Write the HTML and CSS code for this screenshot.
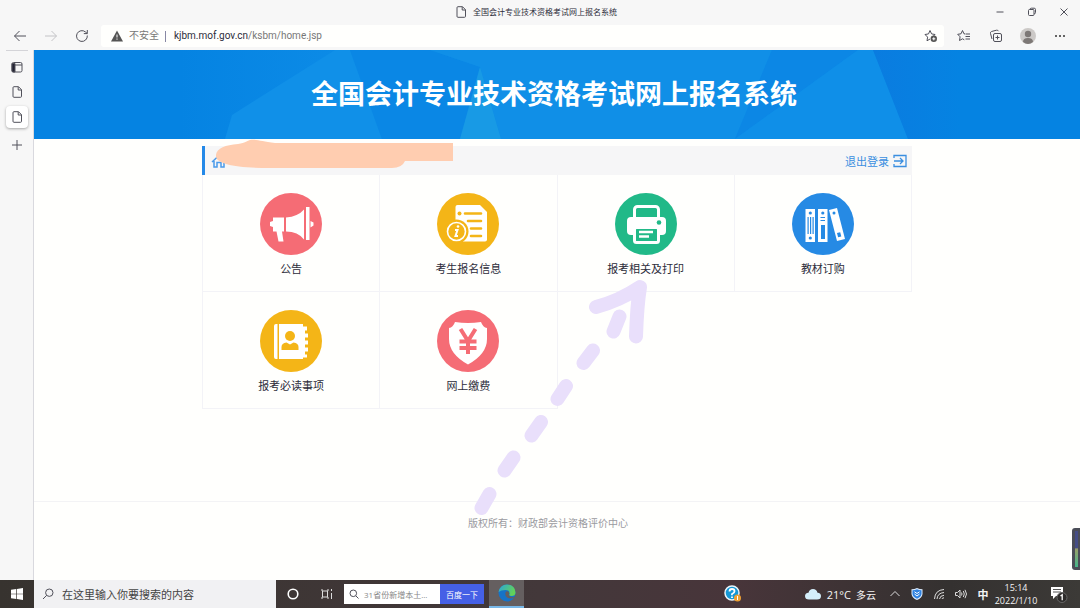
FILE: index.html
```html
<!DOCTYPE html>
<html lang="zh-CN">
<head>
<meta charset="utf-8">
<meta name="viewport" content="width=device-width, initial-scale=1">
<title>全国会计专业技术资格考试网上报名系统</title>
<link rel="stylesheet" href="styles.css">
</head>
<body>
<div class="titlebar">
  <div class="tab-title">
    <svg class="i12" viewBox="0 0 12 12"><path d="M2 1.700q0-1 1-1H7.500L10.500 3.700v6.600q0 1-1 1H3q-1 0-1-1zM7.200.8V4h3.300"/></svg>
    <span>全国会计专业技术资格考试网上报名系统</span>
  </div>
  <div class="window-buttons">
    <button type="button" aria-label="最小化"><svg class="i12" viewBox="0 0 12 12"><path d="M2.500 6h7"/></svg></button>
    <button type="button" aria-label="还原"><svg class="i12" viewBox="0 0 12 12"><rect x="2.500" y="3.500" width="5.500" height="6" rx="1"/><path d="M4 3.500q0-1.300 1.300-1.300h2.900q1.300 0 1.300 1.300v3q0 1.300-1.300 1.300"/></svg></button>
    <button type="button" aria-label="关闭"><svg class="i12" viewBox="0 0 12 12"><path d="M2.500 2.500l7 7M9.500 2.500l-7 7"/></svg></button>
  </div>
</div>

<div class="toolbar">
  <div class="nav-buttons">
    <button type="button" aria-label="后退"><svg class="i14" viewBox="0 0 14 14"><path d="M13 7H1.500M6.500 2l-5 5 5 5"/></svg></button>
    <button type="button" class="faded" aria-label="前进"><svg class="i14" viewBox="0 0 14 14"><path d="M1 7h11.500M7.500 2l5 5-5 5"/></svg></button>
    <button type="button" aria-label="刷新"><svg class="i14" viewBox="0 0 14 14"><path d="M12.300 6.500A5.400 5.400 0 1 1 10.500 3l1.700 1.500M12.300 1v3.600H8.800"/></svg></button>
  </div>
  <div class="address">
    <svg class="i12" viewBox="0 0 12 12"><path class="warn" d="M6 .5L12 11.500H0z"/><path class="warn-mark" d="M6 4.500v3M6 8.500v1.200"/></svg>
    <span class="insecure">不安全</span>
    <span class="divider"></span>
    <span class="url">kjbm.mof.gov.cn<span class="url-path">/ksbm/home.jsp</span></span>
    <button type="button" class="star" aria-label="收藏此页"><svg class="i14" viewBox="0 0 14 14"><path d="M6 10L3 11.800l.6-3.700L1 5.500l3.500-.6L6 1.500l1.600 3.400 3.400.6-1.500 1.500"/><circle class="dark" cx="9.800" cy="9.800" r="3.200"/><path class="white-line" d="M8.300 9.800h3M9.800 8.300v3"/></svg></button>
  </div>
  <div class="tool-buttons">
    <button type="button" aria-label="收藏夹"><svg class="i14" viewBox="0 0 14 14"><path d="M8.500 5L7 4.800 5.500 1.500 4 4.800l-3.300.5L3.100 7.800l-.6 3.700 3-1.700 1.800 1M9 5h4M8.500 7.500H13M8.500 10H13"/></svg></button>
    <button type="button" aria-label="集锦"><svg class="i14" viewBox="0 0 14 14"><rect x="4.500" y="4.500" width="8" height="8" rx="1.500"/><path d="M8.500 6.500v4M6.500 8.500h4M3 10L1.500 4.500q-.4-1.500 1-2l5-1.300q1.500-.3 2 1"/></svg></button>
    <button type="button" aria-label="用户"><svg class="i16" viewBox="0 0 16 16"><circle cx="8" cy="8" r="8" fill="#ccc9c7" stroke="none"/><circle cx="8" cy="6" r="3.200" fill="#7d7876" stroke="none"/><path d="M3 14q0-4 5-4t5 4q-5 4-10 0" fill="#7d7876" stroke="none"/></svg></button>
    <button type="button" aria-label="更多"><svg class="i12" viewBox="0 0 12 12"><g fill="#333" stroke="none"><circle cx="2" cy="6" r="1"/><circle cx="6" cy="6" r="1"/><circle cx="10" cy="6" r="1"/></g></svg></button>
  </div>
</div>

<div class="window">
  <nav class="sidebar" aria-label="标签页">
    <button type="button" aria-label="垂直标签"><svg class="i12" viewBox="0 0 12 12"><rect x="1" y="1.500" width="10" height="9.500" rx="1.500"/><path d="M1 4h10"/><path d="M1 2.500h3V11H2q-1 0-1-1z" fill="#223"/></svg></button>
    <button type="button" aria-label="标签 1"><svg class="i12" viewBox="0 0 12 12"><path d="M2 1.700q0-1 1-1H7.500L10.500 3.700v6.600q0 1-1 1H3q-1 0-1-1zM7.200.8V4h3.300"/></svg></button>
    <button type="button" class="active" aria-label="标签 2"><svg class="i12" viewBox="0 0 12 12"><path d="M2 1.700q0-1 1-1H7.500L10.500 3.700v6.600q0 1-1 1H3q-1 0-1-1zM7.200.8V4h3.300"/></svg></button>
    <button type="button" class="new-tab" aria-label="新建标签"><svg class="i12" viewBox="0 0 12 12"><path d="M6 1v10M1 6h10"/></svg></button>
  </nav>

  <div class="page">
    <header class="banner">
      <svg class="facets" viewBox="34 50 1046 89" preserveAspectRatio="none" aria-hidden="true">
        <defs>
          <linearGradient id="mid"><stop offset="0" stop-color="#0583e2"/><stop offset=".25" stop-color="#0d8ce7"/><stop offset="1" stop-color="#0d8de8"/></linearGradient>
          <linearGradient id="edge"><stop offset="0" stop-color="#0a7ce0"/><stop offset="1" stop-color="#0583e2"/></linearGradient>
        </defs>
        <path fill="url(#mid)" d="M180 50H873L908 139H180z"/>
        <path fill="#1090e8" d="M232 115L335 50H350L382 139H225z"/>
        <path fill="#0a87e5" d="M350 50H430L480 67 460 139H382z"/>
        <path fill="#108fe7" d="M430 50H772L735 139H501L480 67z"/>
        <path fill="#189ae5" d="M480 67L501 139H460z"/>
        <path fill="#0c87e5" d="M772 50H858L735 139z"/>
        <path fill="#0f8fe8" d="M858 50H873L908 139H735z"/>
        <path fill="url(#edge)" d="M873 50H960V139H908z"/>
      </svg>
      <h1>全国会计专业技术资格考试网上报名系统</h1>
    </header>

    <main class="panel">
      <div class="userbar">
        <svg class="home" viewBox="0 0 16 14"><path d="M1 8l7-6.500L15 8M3 7v6h3V8.500h4V13h3V7"/></svg>
        <a class="logout" href="#logout">退出登录
          <svg class="i14" viewBox="0 0 14 14"><path d="M1 4V1.500h12v11H1V10M1 7h8.500M7 4l3 3-3 3"/></svg>
        </a>
        <svg class="scribble" viewBox="216 139 237 30" aria-hidden="true"><path d="M453 143H275C262 142 258 139 250 140 246 141 246 143 238 144 224 145 215 149 216 157 218 164 235 168 270 168H392Q402 168 405 161H453z"/></svg>
      </div>

      <div class="tiles">
        <a class="tile" href="#notice">
          <svg class="badge" viewBox="0 0 62 62"><circle cx="31" cy="31" r="31" fill="#f56c75"/><g fill="#fff"><path d="M13 24.500h11v14h-2l1.500 10h-5l-2-10H13v-4.500l-3-1v-4l3-1zM26 24.500q12-1 18-8v30q-6-8-18-8zM46 14h3.500v33H46zM50.500 28l3 1.500v3l-3 2z"/></g></svg>
          <span>公告</span>
        </a>
        <a class="tile" href="#info">
          <svg class="badge" viewBox="0 0 62 62"><circle cx="31" cy="31" r="31" fill="#f4b517"/><path fill="#fff" d="M18.500 14q0-2 2-2H43l7 7v27.500q0 2-2 2H26L18.500 29z"/><g stroke="#f4b517" stroke-width="2.600" stroke-linecap="round"><path d="M28 20.500h16M31 28h13M34 35.500h10M34 43h10"/></g><circle cx="22.500" cy="20.500" r="2" fill="#f4b517"/><circle cx="19.500" cy="38.500" r="12" fill="#f4b517"/><circle cx="19.500" cy="38.500" r="9" fill="none" stroke="#fff" stroke-width="1.600"/><path d="M18 37h2.500l-2 6h2.500" fill="none" stroke="#fff" stroke-width="2"/><circle cx="21" cy="33.500" r="1.300" fill="#fff"/></svg>
          <span>考生报名信息</span>
        </a>
        <a class="tile" href="#print">
          <svg class="badge" viewBox="0 0 62 62"><circle cx="31" cy="31" r="31" fill="#21b988"/><rect x="19.500" y="13.500" width="24" height="18" rx="3" fill="none" stroke="#fff" stroke-width="3"/><rect x="12" y="24" width="39" height="18" rx="4" fill="#fff"/><circle cx="44" cy="29.500" r="2.300" fill="#21b988"/><rect x="19.500" y="34.500" width="24" height="15" rx="2" fill="#21b988" stroke="#fff" stroke-width="3"/><path d="M24 39h14M24 43.500h10" stroke="#fff" stroke-width="2.400"/></svg>
          <span>报考相关及打印</span>
        </a>
        <a class="tile" href="#books">
          <svg class="badge" viewBox="0 0 62 62"><circle cx="31" cy="31" r="31" fill="#268ae4"/><path fill="#fff" d="M13.500 16H23v33h-9.500zM26 16h9.500v33H26zM37 17l8-2 8 31-8 2z"/><g fill="#268ae4"><circle cx="18.300" cy="20" r="1.600"/><circle cx="18.300" cy="45" r="1.600"/><path d="M15.500 24h1.200v17h-1.200zM18 24h1.200v17H18zM20.500 24h1.200v17h-1.200zM29 32h4v14h-4zM28.500 24h4.500v1h-4.500zM28.500 27h4.500v1h-4.500zM45 40l3.200-.8 1.100 4.300-3.200.8z"/><circle cx="30.800" cy="20" r="1.600"/><circle cx="42" cy="20" r="1.500"/></g></svg>
          <span>教材订购</span>
        </a>
        <a class="tile" href="#rules">
          <svg class="badge" viewBox="0 0 62 62"><circle cx="31" cy="31" r="31" fill="#f4b517"/><path fill="#fff" d="M14 16q0-2 2-2h1.500v35H16q-2 0-2-2zM19 14h24v2.500h4v4h-2v3h3v4h-3v3h3v4h-3v3h3v4h-3v3h2v3h-4V49H19z"/><circle cx="30" cy="26" r="5" fill="#f4b517"/><path fill="#f4b517" d="M21.500 40v-3q0-4 5-4.500l3.500 2 3.500-2q5 .5 5 4.500v3z"/></svg>
          <span>报考必读事项</span>
        </a>
        <a class="tile" href="#pay">
          <svg class="badge" viewBox="0 0 62 62"><circle cx="31" cy="31" r="31" fill="#f56c75"/><path fill="#fff" d="M12 18q4-.5 6-6 13 2 26 0 2 5.500 6 6v11q0 15-19 25.500Q12 44 12 29z"/><path d="M23.500 19l7.500 12 7.500-12M22.500 31.500h17M22.500 38h17M31 31v13" fill="none" stroke="#f56c75" stroke-width="4"/></svg>
          <span>网上缴费</span>
        </a>
      </div>

      <svg class="arrow" viewBox="474 278 174 238" aria-hidden="true"><path d="M489.500 494l-8 14M513.500 457.500l-9 13M541 422l-9.500 13.500M566 386l-8.500 13M593 350.500l-9.500 12.500M619.500 316.500l-6 15"/><path d="M596 307Q619 301 640 287 637 305 636 336.500"/></svg>
    </main>

    <footer class="copyright">版权所有：财政部会计资格评价中心</footer>
    <div class="meter"><span></span></div>
  </div>
</div>

<div class="taskbar">
  <button type="button" class="start" aria-label="开始"><svg class="i12" viewBox="0 0 12 12"><path fill="#fff" stroke="none" d="M0 1.700L5.300 1v4.700H0zM6 .9L12 0v5.700H6zM0 6.300h5.300V11L0 10.300zM6 6.300h6V12l-6-.9z"/></svg></button>
  <label class="search">
    <svg class="i12" viewBox="0 0 12 12"><circle cx="7.300" cy="4.700" r="3.700"/><path d="M4.700 7.300L1 11"/></svg>
    <input type="text" aria-label="搜索" placeholder="在这里输入你要搜索的内容">
  </label>
  <button type="button" class="task" aria-label="Cortana"><svg class="i12" viewBox="0 0 12 12"><circle cx="6" cy="6" r="4.800" stroke="#fff" stroke-width="1.600"/></svg></button>
  <button type="button" class="task" aria-label="任务视图"><svg class="i12" viewBox="0 0 12 12"><path stroke="#ddd" d="M1 1v2h6V1M1 11V9h6v2M1.500 3v6M6.500 3v6M10.500 1v2M10.500 5v6"/></svg></button>
  <form class="baidu">
    <svg class="i12" viewBox="0 0 12 12"><circle cx="5.300" cy="5.300" r="3.300"/><path d="M7.800 7.800L10.500 10.500"/></svg>
    <input type="text" aria-label="百度搜索" placeholder="31省份新增本土...">
    <button type="button">百度一下</button>
  </form>
  <button type="button" class="edge" aria-label="Edge"><svg class="i18" viewBox="0 0 18 18"><defs><linearGradient id="e1" x1="0" y1="0" x2="1" y2=".4"><stop offset="0" stop-color="#2aa5dc"/><stop offset="1" stop-color="#63d257"/></linearGradient></defs><circle cx="9" cy="9" r="8.500" fill="#1673c8" stroke="none"/><path fill="url(#e1)" stroke="none" d="M.6 8Q2 .5 9 .5q8 .5 8.500 8 0 3.500-4 3.500-3 0-2-2 .5-4-4-4Q3 6 .6 8z"/><path fill="#655f60" stroke="none" d="M7.500 8.500Q6.500 14 13 14.500q2.500 0 4-2-3 1-5 0-2-1-.8-2.700 0-2.500-1.700-2.500-1.500 0-2 1.200z"/></svg></button>
  <div class="tray">
    <button type="button" class="help" aria-label="帮助"><svg class="i18" viewBox="0 0 18 18"><circle cx="8" cy="8" r="7" fill="#1598d6" stroke="#eaf6fc" stroke-width="1.500"/><path stroke="#fff" stroke-width="1.800" d="M5.500 6.500Q5.500 4 8 4t2.500 2.200Q10.500 8 8 9v1.200M8 11.500v1.500"/><circle cx="13.500" cy="13" r="3.500" fill="#f0a132" stroke="none"/><path stroke="#fff" d="M13.500 11v4"/></svg></button>
    <a class="weather" href="#weather"><svg class="i18" viewBox="0 0 18 18"><path fill="#d4eefa" stroke="none" d="M5 14.500q-4 0-4-3.500 0-3 3.500-3.300Q5.500 4 9 4t4.500 3.700Q17 8 17 11q0 3.500-4 3.500z"/></svg><span>21°C</span><span class="sky">多云</span></a>
    <button type="button" aria-label="显示隐藏图标"><svg class="i12" viewBox="0 0 12 12"><path d="M1.500 8L6 3.500 10.500 8"/></svg></button>
    <button type="button" aria-label="安全"><svg class="i12" viewBox="0 0 12 12"><path fill="#dcecff" stroke="none" d="M6 0q2.500 1.300 5.500 1.300V6Q11 10 6 12 1 10 .5 6V1.300Q3.500 1.300 6 0z"/><path fill="#2f82e0" stroke="none" d="M6 1.200q2 1 4.500 1V6Q10 9 6 10.800 2 9 1.500 6V2.200Q4 2.200 6 1.200z"/><path stroke="#fff" d="M3.500 3.800L6 5.500l2.500-1.700M3.500 6L6 8l2.500-2"/></svg></button>
    <button type="button" aria-label="网络"><svg class="i12" viewBox="0 0 12 12"><path d="M1.500 11Q2 2 11 1.500M4 11Q4.500 5 11 4.500M6.500 11Q7 7.500 11 7.300M9 11q0-1 2-1.200"/></svg></button>
    <button type="button" aria-label="音量"><svg class="i12" viewBox="0 0 12 12"><path d="M.5 4.500h2L5 2v8L2.500 7.500h-2zM6.500 4.500q1 1.500 0 3M8.300 3q2 3 0 6M10 1.800q3 4.200 0 8.400"/></svg></button>
    <button type="button" class="ime">中</button>
    <div class="clock"><span>15:14</span><span>2022/1/10</span></div>
    <button type="button" class="notes" aria-label="通知"><svg class="i20" viewBox="0 0 20 20"><path fill="#fff" stroke="none" d="M3 3h12v9H8l-3 3v-3H3z"/><path stroke="#555" d="M5 5.500h8M5 8h8"/><circle cx="14" cy="13.500" r="5" fill="#2d2b2a" stroke="#666"/><path stroke="#fff" stroke-width="1.300" d="M12.500 12l1.700-1.300v5.500"/></svg></button>
  </div>
</div>
</body>
</html>
```

FILE: styles.css
```css
* { box-sizing: border-box; }

body {
  margin: 0;
  min-height: 100vh;
  display: flex;
  flex-direction: column;
  background: #f7f7f7;
  color: #2c2c3a;
  font-family: "Open Sans", "Noto Sans CJK SC", sans-serif;
  font-size: 11px;
}

button {
  display: flex;
  align-items: center;
  justify-content: center;
  padding: 0;
  border: 0;
  background: none;
  color: inherit;
  font: inherit;
}

a { color: inherit; text-decoration: none; }

input {
  min-width: 0;
  padding: 0;
  border: 0;
  background: none;
  font: inherit;
  outline: 0;
}

svg { display: block; flex: none; fill: none; stroke: #50505a; stroke-width: 1; }

.i12 { width: 12px; height: 12px; }
.i14 { width: 14px; height: 14px; }
.i16 { width: 16px; height: 16px; }
.i18 { width: 18px; height: 18px; }
.i20 { width: 20px; height: 20px; }

/* Browser chrome */
.titlebar {
  display: grid;
  grid-template-columns: 88px 1fr 96px;
  height: 24px;
}
.tab-title {
  grid-column: 2;
  display: flex;
  align-items: center;
  justify-content: center;
  gap: 6px;
  font-size: 8px;
  line-height: 12px;
}
.window-buttons { display: grid; grid-template-columns: repeat(3, 1fr); }

.toolbar { display: flex; height: 26px; padding-bottom: 2px; }
.nav-buttons { display: grid; grid-template-columns: repeat(3, 31px); padding: 0 4px; }
.faded { opacity: .3; }
.address {
  flex: 1;
  display: flex;
  align-items: center;
  gap: 6px;
  margin: 1px 0;
  padding: 0 6px 0 10px;
  border-radius: 3px;
  background: #fffffd;
  font-family: Roboto, "Noto Sans CJK SC", sans-serif;
  font-size: 10px;
  line-height: 14px;
}
.warn { fill: #555; stroke: none; }
.warn-mark { stroke: #fff; }
.insecure { color: #777; }
.divider { width: 1px; height: 11px; margin-right: 2px; background: #8888a4; }
.url-path { color: #777; }
.star { margin-left: auto; }
.dark { fill: #555; stroke: none; }
.white-line { stroke: #fff; }
.tool-buttons { display: grid; grid-template-columns: repeat(4, 32px); padding: 0 4px; }

.window { flex: 1; display: flex; }
.sidebar {
  width: 34px;
  display: flex;
  flex-direction: column;
  align-items: center;
  padding-top: 6px;
  border-right: 1px solid #d9d9de;
}
.sidebar button { width: 22px; height: 22px; margin-bottom: 3px; }
.sidebar::before {
  content: "";
  width: 22px;
  margin-top: -6px;
  margin-bottom: 5px;
  border-top: 1px solid #d4d4d8;
}
.sidebar .active {
  border-radius: 4px;
  background: #fff;
  box-shadow: 0 1px 3px #0005;
}
.sidebar .new-tab { margin-top: 3px; }

/* Site */
.page {
  position: relative;
  flex: 1;
  display: flex;
  flex-direction: column;
  background: #fffffd;
}
.banner {
  position: relative;
  height: 89px;
  display: flex;
  align-items: center;
  justify-content: center;
  padding: 0 6px 2px 0;
  background: #0583e2;
}
.facets { position: absolute; inset: 0; width: 100%; height: 100%; stroke: none; }
.banner h1 {
  position: relative;
  margin: 0;
  color: #fff;
  font-size: 27px;
  line-height: 36px;
  font-weight: 700;
}

.panel { position: relative; width: 100%; max-width: 710px; margin: 7px auto 0; }
.userbar {
  position: relative;
  display: flex;
  align-items: center;
  height: 29px;
  padding: 0 5px 0 6px;
  border-left: 3px solid #2489e8;
  background: #f6f6f7;
}
.home { width: 16px; height: 14px; stroke: #4b9bea; stroke-width: 1.500; }
.logout {
  display: flex;
  align-items: center;
  gap: 4px;
  margin-left: auto;
  color: #3a8ee0;
}
.logout svg { stroke: #3a8ee0; stroke-width: 1.300; }
.scribble { position: absolute; left: 11px; top: -7px; width: 237px; height: 30px; fill: #ffcdb0; stroke: none; }

.tiles {
  display: grid;
  grid-template-columns: repeat(4, 1fr);
  border-left: 1px solid #f3f3f7;
}
.tile {
  display: flex;
  flex-direction: column;
  align-items: center;
  gap: 5px;
  padding: 18px 0 14px;
  border-right: 1px solid #f3f3f7;
  border-bottom: 1px solid #f3f3f7;
  line-height: 17px;
}
.badge { width: 62px; height: 62px; stroke: none; }

.arrow {
  position: absolute;
  left: 272px;
  top: 132px;
  width: 174px;
  height: 238px;
  stroke: #e9dffb;
  stroke-width: 14;
  stroke-linecap: round;
  stroke-linejoin: round;
}

.copyright {
  margin-top: auto;
  padding: 14px 18px 50px 0;
  border-top: 1px solid #f3f3f5;
  color: #9a9a9f;
  font-size: 10px;
  line-height: 14px;
  text-align: center;
}
.meter {
  position: absolute;
  right: 0;
  bottom: 10px;
  width: 8px;
  height: 42px;
  padding: 3px 2px 3px 3px;
  border-radius: 3px 0 0 3px;
  background: #4b4d57;
}
.meter span {
  display: block;
  height: 100%;
  background: linear-gradient(#454d86 48%, #9ba06a 49%, #45b58a);
}

/* Taskbar */
.taskbar {
  display: flex;
  align-items: stretch;
  height: 28px;
  background: linear-gradient(90deg, #37332f, #43383a 50%, #48353a 68%, #343130 88%, #3c3a37);
  color: #f4f4f4;
}
.start { width: 34px; }
.search {
  width: 242px;
  display: flex;
  align-items: center;
  gap: 8px;
  padding-left: 8px;
  background: #f1f1f3;
}
.search input { flex: 1; }
.search input::placeholder { color: #444; opacity: 1; }
.task { width: 34px; }
.baidu {
  display: flex;
  align-items: center;
  width: 140px;
  margin: 4px 5px 4px 0;
  padding-left: 4px;
  background: #fff;
  font-size: 8px;
}
.baidu input { flex: 1; margin-left: 4px; }
.baidu input::placeholder { color: #888; opacity: 1; }
.baidu button { width: 44px; align-self: stretch; background: #4560e6; color: #fff; }
.edge { width: 35px; border-bottom: 2px solid #78b8e8; background: #655f60; }
.tray { flex: 1; display: flex; align-items: center; justify-content: flex-end; }
.tray > button { width: 22px; }
.tray svg { stroke: #ddd; }
.tray .help { margin-right: 60px; }
.weather { display: flex; align-items: center; gap: 5px; margin-right: 8px; }
.sky { font-size: 10px; }
.ime { font-weight: 700; }
.clock {
  display: flex;
  flex-direction: column;
  align-items: center;
  width: 44px;
  font-size: 9px;
  line-height: 13px;
}
.tray .notes { width: 20px; margin: 0 12px 0 10px; }
```
